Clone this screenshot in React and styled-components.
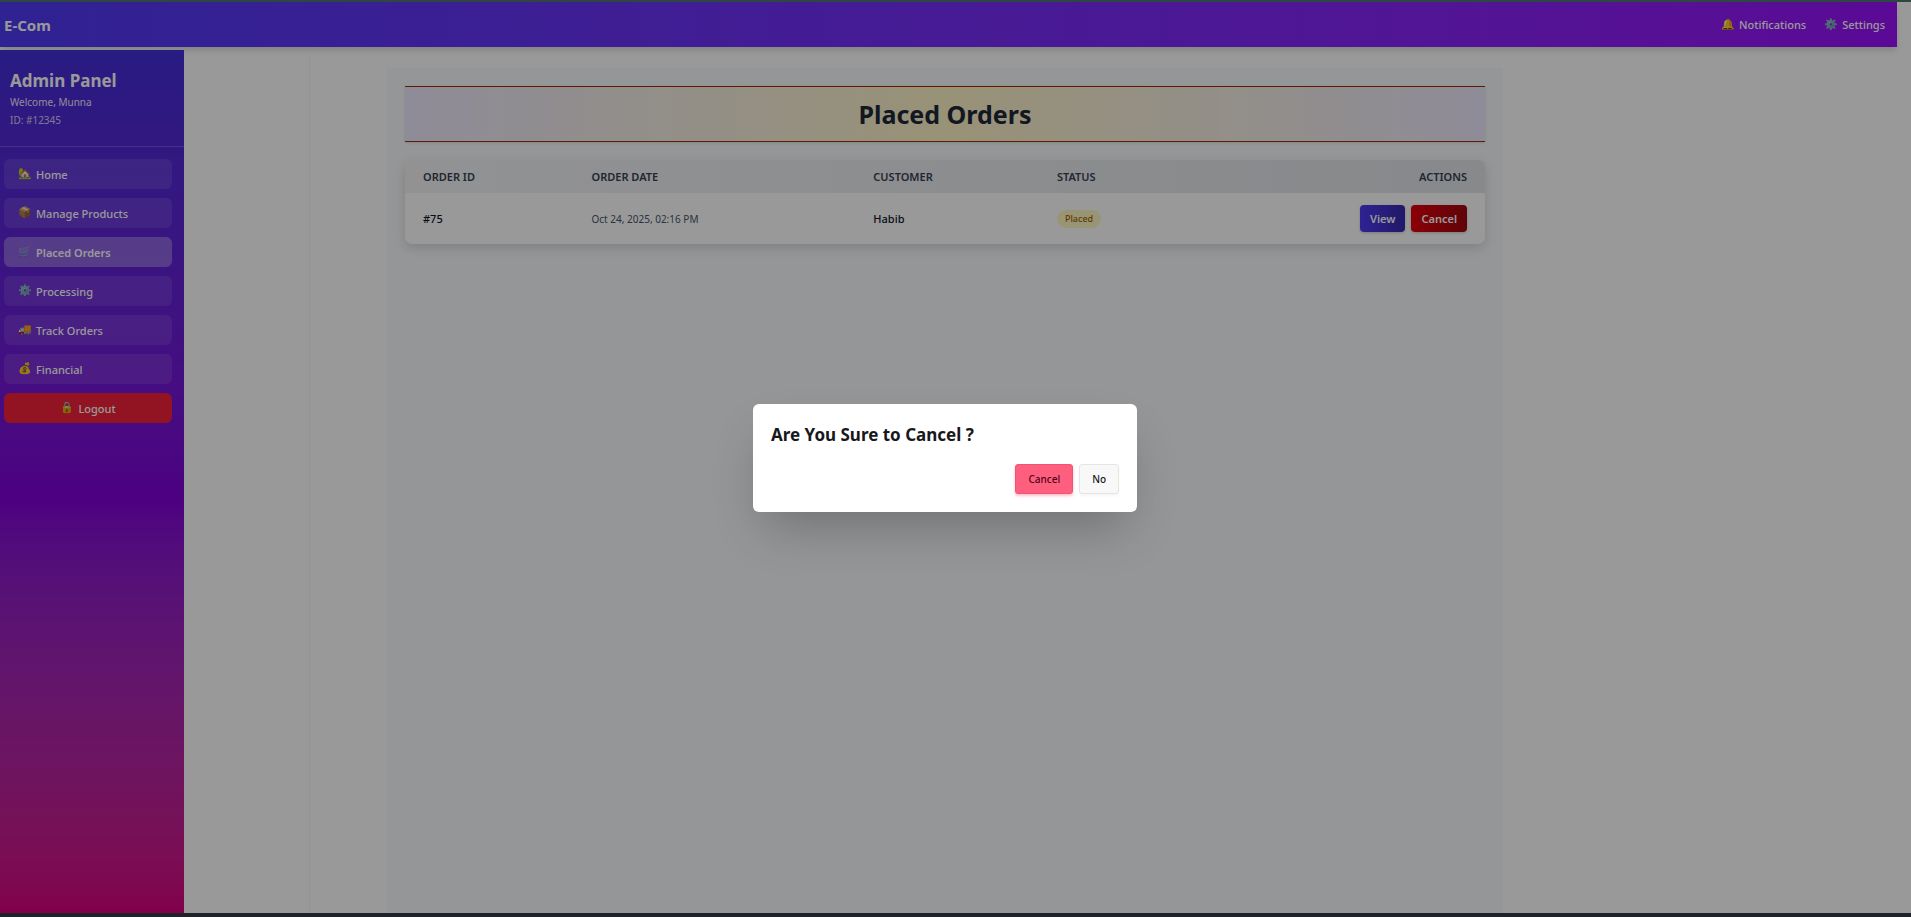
import React from "react";
import styled, { createGlobalStyle } from "styled-components";

const GlobalStyle = createGlobalStyle`
  *, *::before, *::after { box-sizing: border-box; }
  body {
    margin: 0;
    background: #ffffff;
    font-family: "Noto Sans", "Open Sans", sans-serif;
    color: #101828;
  }
  h1, h2, p { margin: 0; }
  button { font-family: inherit; border: 0; cursor: pointer; }
`;

const Screen = styled.div`
  display: flex;
  flex-direction: column;
  height: 100vh;
  border-top: 2px solid #2f4743;
  border-bottom: 4px solid #20222a;
`;

const Page = styled.div`
  position: relative;
  flex: 1;
  min-height: 0;
  display: flex;
  flex-direction: column;
  gap: 3px;
  overflow: hidden;
`;

const Header = styled.header`
  display: flex;
  align-items: center;
  justify-content: space-between;
  flex: 0 0 45px;
  margin-right: 14px;
  padding: 0 12px 0 4px;
  color: #ffffff;
  background: linear-gradient(in oklab to right, #4f39f6, #9810fa);
  box-shadow: 0 4px 6px -1px rgba(0, 0, 0, 0.15);
`;

const Brand = styled.div`
  font-size: 15px;
  font-weight: 700;
`;

const HeaderNav = styled.nav`
  display: flex;
  gap: 18px;
`;

const HeaderLink = styled.a`
  display: flex;
  align-items: center;
  gap: 4px;
  font-size: 11px;
  font-weight: 500;
  line-height: 18px;
  color: #ffffff;
  text-decoration: none;
`;

const Emoji = styled.span`
  width: 14px;
  font-family: "Noto Color Emoji", sans-serif;
  font-size: 11px;
  line-height: 18px;
  white-space: nowrap;
`;

const Body = styled.div`
  flex: 1;
  min-height: 0;
  display: flex;
`;

const Sidebar = styled.aside`
  flex: 0 0 184px;
  margin-right: 125px;
  color: #ffffff;
  background: linear-gradient(in oklab to bottom, #432dd7, #8000d7 52%, #d8007f);
`;

const Profile = styled.div`
  padding: 18px 10px 17px;
  border-bottom: 1px solid rgba(255, 255, 255, 0.2);
`;

const ProfileTitle = styled.h2`
  font-size: 17px;
  font-weight: 700;
  line-height: 25px;
`;

const ProfileLine = styled.p`
  font-size: 10px;
  line-height: 18px;
  opacity: ${(p) => (p.$muted ? 0.75 : 0.9)};
`;

const Menu = styled.nav`
  display: flex;
  flex-direction: column;
  gap: 9px;
  padding: 12px 12px 12px 4px;
`;

const MenuLink = styled.a`
  display: flex;
  align-items: center;
  gap: 4px;
  height: 30px;
  padding: 0 14px;
  border-radius: 6px;
  font-size: 11px;
  font-weight: ${(p) => (p.$active ? 600 : 500)};
  color: #ffffff;
  text-decoration: none;
  background: rgba(255, 255, 255, ${(p) => (p.$active ? 0.3 : 0.1)});
`;

const Logout = styled(MenuLink).attrs({ as: "button", type: "button" })`
  justify-content: center;
  background: #f4203a;
`;

const Main = styled.main`
  flex: 1;
  min-width: 0;
  display: flex;
  margin-top: 3px;
  padding: 15px 0 0 77px;
  border-left: 1px solid #f5f5f5;
`;

const Panel = styled.section`
  flex: 0 1 1116px;
  padding: 18px;
  background: #f8fafc;
`;

const PageTitle = styled.h1`
  padding: 9px 0;
  border: solid #9f2d00;
  border-width: 1px 0;
  font-size: 25px;
  font-weight: 700;
  line-height: 36px;
  text-align: center;
  color: #1e2939;
  background: linear-gradient(in oklab to right, #ede9fe, #fef3c6, #ede9fe);
  box-shadow: 0 1px 3px rgba(0, 0, 0, 0.1);
`;

const TableCard = styled.div`
  margin-top: 18px;
  overflow: hidden;
  border-radius: 7px;
  background: #ffffff;
  box-shadow: 0 4px 12px rgba(0, 0, 0, 0.14);
`;

const Table = styled.table`
  width: 100%;
  table-layout: fixed;
  border-collapse: collapse;
`;

const HeadRow = styled.tr`
  height: 33px;
  background: linear-gradient(to right, #f3f4f6, #e1e4e8);
`;

const HeadCell = styled.th`
  width: ${(p) => p.$width};
  padding: 0 18px;
  font-size: 11px;
  font-weight: 600;
  text-align: ${(p) => (p.$end ? "right" : "left")};
  text-transform: uppercase;
  color: #364153;
`;

const Row = styled.tr`
  height: 51px;
`;

const Cell = styled.td`
  padding: 0 18px;
  font-size: ${(p) => (p.$small ? "10px" : "11px")};
  font-weight: ${(p) => (p.$small ? 400 : 500)};
  color: ${(p) => (p.$small ? "#4a5565" : "#101828")};
`;

const Badge = styled.span`
  display: inline-block;
  padding: 0 8px;
  border-radius: 9px;
  font-size: 9px;
  font-weight: 500;
  line-height: 18px;
  color: #a65f00;
  background: #fef9c2;
`;

const RowActions = styled.div`
  display: flex;
  justify-content: flex-end;
  gap: 6px;
`;

const ActionButton = styled.button`
  height: 27px;
  padding: 0 10px;
  border-radius: 4px;
  font-size: 11px;
  font-weight: 600;
  color: #ffffff;
  background: ${(p) =>
    p.$danger
      ? "linear-gradient(to right, #e7000b, #9f0712)"
      : "linear-gradient(to right, #4f39f6, #372aac)"};
  box-shadow: 0 1px 3px rgba(0, 0, 0, 0.2);
`;

const Overlay = styled.div`
  position: absolute;
  inset: 0;
  display: flex;
  align-items: center;
  justify-content: center;
  padding-right: 21px;
  background: rgba(0, 0, 0, 0.4);
`;

const Dialog = styled.div`
  width: 384px;
  max-width: 90%;
  padding: 18px;
  border-radius: 6px;
  background: #ffffff;
  box-shadow: 0 25px 50px -12px rgba(0, 0, 0, 0.25);
`;

const DialogTitle = styled.h2`
  font-size: 17px;
  font-weight: 700;
  line-height: 25px;
  color: #18181b;
`;

const DialogActions = styled.div`
  display: flex;
  justify-content: flex-end;
  gap: 6px;
  margin-top: 17px;
`;

const DialogButton = styled.button`
  height: 30px;
  padding: 0 12px;
  border: 1px solid ${(p) => (p.$danger ? "#ee5574" : "#e5e5e5")};
  border-radius: 3px;
  font-size: 10px;
  font-weight: 500;
  color: ${(p) => (p.$danger ? "#4d0218" : "#18181b")};
  background: ${(p) => (p.$danger ? "#ff5f7f" : "#f8f8f8")};
  box-shadow: 0 2px 3px ${(p) => (p.$danger ? "rgba(255, 95, 127, 0.4)" : "rgba(0, 0, 0, 0.04)")};
`;

const menuItems = [
  ["🏡", "Home"],
  ["📦", "Manage Products"],
  ["🛒", "Placed Orders"],
  ["⚙️", "Processing"],
  ["🚚", "Track Orders"],
  ["💰", "Financial"],
];

export default function App() {
  return (
    <Screen>
      <GlobalStyle />
      <Page>
        <Header>
          <Brand>E-Com</Brand>
          <HeaderNav>
            <HeaderLink href="#notifications">
              <Emoji>🔔</Emoji>Notifications
            </HeaderLink>
            <HeaderLink href="#settings">
              <Emoji>⚙️</Emoji>Settings
            </HeaderLink>
          </HeaderNav>
        </Header>
        <Body>
          <Sidebar>
            <Profile>
              <ProfileTitle>Admin Panel</ProfileTitle>
              <ProfileLine>Welcome, Munna</ProfileLine>
              <ProfileLine $muted>ID: #12345</ProfileLine>
            </Profile>
            <Menu>
              {menuItems.map(([icon, label]) => (
                <MenuLink key={label} href="#" $active={label === "Placed Orders"}>
                  <Emoji>{icon}</Emoji>
                  {label}
                </MenuLink>
              ))}
              <Logout>
                <Emoji>🔒</Emoji>Logout
              </Logout>
            </Menu>
          </Sidebar>
          <Main>
            <Panel>
              <PageTitle>Placed Orders</PageTitle>
              <TableCard>
                <Table>
                  <thead>
                    <HeadRow>
                      <HeadCell $width="15.6%">Order ID</HeadCell>
                      <HeadCell $width="26.1%">Order Date</HeadCell>
                      <HeadCell $width="17%">Customer</HeadCell>
                      <HeadCell $width="16%">Status</HeadCell>
                      <HeadCell $end>Actions</HeadCell>
                    </HeadRow>
                  </thead>
                  <tbody>
                    <Row>
                      <Cell>#75</Cell>
                      <Cell $small>Oct 24, 2025, 02:16 PM</Cell>
                      <Cell>Habib</Cell>
                      <Cell>
                        <Badge>Placed</Badge>
                      </Cell>
                      <Cell>
                        <RowActions>
                          <ActionButton type="button">View</ActionButton>
                          <ActionButton type="button" $danger>
                            Cancel
                          </ActionButton>
                        </RowActions>
                      </Cell>
                    </Row>
                  </tbody>
                </Table>
              </TableCard>
            </Panel>
          </Main>
        </Body>
        <Overlay>
          <Dialog role="dialog" aria-modal="true" aria-labelledby="dialog-title">
            <DialogTitle id="dialog-title">Are You Sure to Cancel ?</DialogTitle>
            <DialogActions>
              <DialogButton type="button" $danger>
                Cancel
              </DialogButton>
              <DialogButton type="button">No</DialogButton>
            </DialogActions>
          </Dialog>
        </Overlay>
      </Page>
    </Screen>
  );
}
